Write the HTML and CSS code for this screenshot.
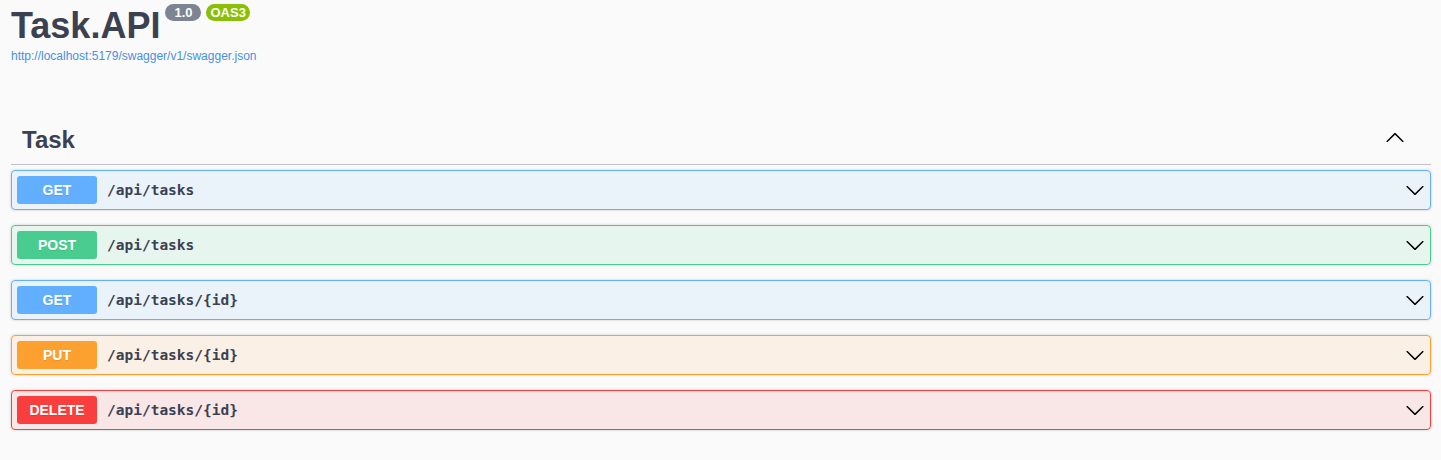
FILE: index.html
```html
<!DOCTYPE html>
<html lang="en">
<head>
<meta charset="utf-8">
<title>Task.API</title>
<link rel="stylesheet" href="styles.css">
</head>
<body>
<div class="page">
  <div class="info">
    <h2 class="title">Task.API<span class="badge version">1.0</span><span class="badge stamp">OAS3</span></h2>
    <a class="url" href="#">http://localhost:5179/swagger/v1/swagger.json</a>
  </div>

  <section class="tag-section">
    <h3 class="tag-header">
      <span class="tag-name">Task</span>
      <svg class="arrow up" width="20" height="20" viewBox="0 0 20 20" aria-hidden="true"><path d="M17.418 14.908c.272.268.709.268.979 0s.271-.701 0-.969l-7.908-7.83c-.27-.268-.707-.268-.979 0l-7.908 7.83c-.27.268-.27.701 0 .969.271.268.709.268.979 0L10 7.767l7.418 7.141z"/></svg>
    </h3>

    <div class="ops">
      <div class="opblock get">
        <span class="method">GET</span>
        <span class="path">/api/tasks</span>
        <svg class="arrow" width="20" height="20" viewBox="0 0 20 20" aria-hidden="true"><path d="M17.418 6.109c.272-.268.709-.268.979 0s.271.701 0 .969l-7.908 7.83c-.27.268-.707.268-.979 0l-7.908-7.83c-.27-.268-.27-.701 0-.969.271-.268.709-.268.979 0L10 13.25l7.418-7.141z"/></svg>
      </div>
      <div class="opblock post">
        <span class="method">POST</span>
        <span class="path">/api/tasks</span>
        <svg class="arrow" width="20" height="20" viewBox="0 0 20 20" aria-hidden="true"><path d="M17.418 6.109c.272-.268.709-.268.979 0s.271.701 0 .969l-7.908 7.83c-.27.268-.707.268-.979 0l-7.908-7.83c-.27-.268-.27-.701 0-.969.271-.268.709-.268.979 0L10 13.25l7.418-7.141z"/></svg>
      </div>
      <div class="opblock get">
        <span class="method">GET</span>
        <span class="path">/api/tasks/{id}</span>
        <svg class="arrow" width="20" height="20" viewBox="0 0 20 20" aria-hidden="true"><path d="M17.418 6.109c.272-.268.709-.268.979 0s.271.701 0 .969l-7.908 7.83c-.27.268-.707.268-.979 0l-7.908-7.83c-.27-.268-.27-.701 0-.969.271-.268.709-.268.979 0L10 13.25l7.418-7.141z"/></svg>
      </div>
      <div class="opblock put">
        <span class="method">PUT</span>
        <span class="path">/api/tasks/{id}</span>
        <svg class="arrow" width="20" height="20" viewBox="0 0 20 20" aria-hidden="true"><path d="M17.418 6.109c.272-.268.709-.268.979 0s.271.701 0 .969l-7.908 7.83c-.27.268-.707.268-.979 0l-7.908-7.83c-.27-.268-.27-.701 0-.969.271-.268.709-.268.979 0L10 13.25l7.418-7.141z"/></svg>
      </div>
      <div class="opblock delete">
        <span class="method">DELETE</span>
        <span class="path">/api/tasks/{id}</span>
        <svg class="arrow" width="20" height="20" viewBox="0 0 20 20" aria-hidden="true"><path d="M17.418 6.109c.272-.268.709-.268.979 0s.271.701 0 .969l-7.908 7.83c-.27.268-.707.268-.979 0l-7.908-7.83c-.27-.268-.27-.701 0-.969.271-.268.709-.268.979 0L10 13.25l7.418-7.141z"/></svg>
      </div>
    </div>
  </section>
</div>
</body>
</html>
```

FILE: styles.css
```css
html, body {
  margin: 0;
  padding: 0;
}

body {
  background: #fafafa;
  font-family: "Liberation Sans", Arial, sans-serif;
  color: #3b4151;
}

.page {
  padding: 5px 10px 0 11px;
}

.info {
  display: flex;
  flex-direction: column;
  align-items: flex-start;
}

.title {
  margin: 0;
  font-size: 36px;
  line-height: 41px;
  font-weight: 700;
  color: #3b4151;
}

.badge {
  display: inline-block;
  vertical-align: top;
  margin-top: -1px;
  margin-left: 5px;
  height: 17px;
  line-height: 17px;
  border-radius: 57px;
  font-size: 13px;
  font-weight: 700;
  color: #fff;
}

.version {
  padding: 0 9px;
  background: #7d8492;
}

.stamp {
  padding: 0 4px;
  background: #89bf04;
}

.url {
  margin-top: 3px;
  font-size: 12px;
  line-height: 14px;
  color: #4990e2;
  text-decoration: none;
}

.tag-section {
  margin-top: 53px;
}

.tag-header {
  margin: 0;
  display: flex;
  align-items: center;
  padding: 10px 26px 10px 11px;
  border-bottom: 1px solid rgba(59, 65, 81, 0.3);
  font-size: 24px;
  line-height: 28px;
  font-weight: 700;
  color: #3b4151;
}

.tag-name {
  flex: 1;
}

.arrow {
  flex: none;
  fill: #000;
}

.arrow.up {
  margin-bottom: 6px;
}

.ops {
  margin-top: 5px;
}

.opblock {
  display: flex;
  align-items: center;
  height: 38px;
  box-sizing: content-box;
  padding: 0 5px;
  margin-bottom: 15px;
  border: 1px solid;
  border-radius: 4px;
  box-shadow: 0 0 3px rgba(0, 0, 0, 0.19);
}

.method {
  min-width: 80px;
  padding: 6px 0;
  line-height: 16px;
  border-radius: 3px;
  font-size: 14px;
  font-weight: 700;
  text-align: center;
  color: #fff;
  text-shadow: 0 1px 0 rgba(0, 0, 0, 0.1);
}

.path {
  flex: 1;
  padding: 0 10px;
  font-family: "DejaVu Sans Mono", "Liberation Mono", monospace;
  font-size: 14.5px;
  font-weight: 700;
  color: #3b4151;
}

.get { background: rgba(97, 175, 254, 0.1); border-color: #61affe; }
.get .method { background: #61affe; }

.post { background: rgba(73, 204, 144, 0.1); border-color: #49cc90; }
.post .method { background: #49cc90; }

.put { background: rgba(252, 161, 48, 0.1); border-color: #fca130; }
.put .method { background: #fca130; }

.delete { background: rgba(249, 62, 62, 0.1); border-color: #f93e3e; }
.delete .method { background: #f93e3e; }
```
